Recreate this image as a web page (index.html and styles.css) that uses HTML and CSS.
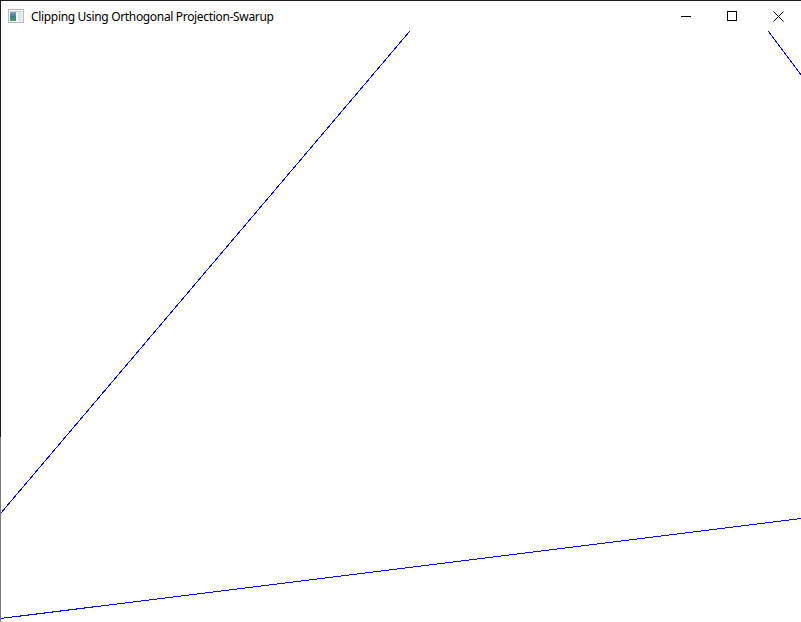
FILE: index.html
```html
<!DOCTYPE html>
<html>
<head>
<meta charset="utf-8">
<link rel="stylesheet" href="styles.css">
</head>
<body>
<div class="window">
  <div class="edge"></div>
  <div class="main">
    <div class="titlebar">
      <svg class="appicon" width="16" height="16" viewBox="0 0 16 16">
        <defs>
          <linearGradient id="g1" x1="0" y1="0" x2="0" y2="1">
            <stop offset="0" stop-color="#7fa6c8"/>
            <stop offset="0.5" stop-color="#3f7c8c"/>
            <stop offset="1" stop-color="#4aa070"/>
          </linearGradient>
        </defs>
        <rect x="0.5" y="1.5" width="15" height="13" fill="#f4f4f4" stroke="#b9b9b9"/>
        <rect x="2" y="4" width="6" height="9" fill="url(#g1)"/>
        <rect x="10" y="4" width="4" height="9" fill="#dfe6e9"/>
        <rect x="2" y="3" width="12" height="1" fill="#cfcfcf"/>
      </svg>
      <span class="title">Clipping Using Orthogonal Projection-Swarup</span>
      <div class="controls">
        <div class="ctl">
          <svg width="10" height="10" viewBox="0 0 10 10"><path d="M0 5.5H10" stroke="#000" stroke-width="1"/></svg>
        </div>
        <div class="ctl">
          <svg width="10" height="10" viewBox="0 0 10 10"><rect x="0.5" y="0.5" width="9" height="9" fill="none" stroke="#000"/></svg>
        </div>
        <div class="ctl">
          <svg width="11" height="11" viewBox="0 0 11 11"><path d="M0.5 0.5L10.5 10.5M10.5 0.5L0.5 10.5" stroke="#000" stroke-width="1"/></svg>
        </div>
      </div>
    </div>
    <div class="client">
      <svg class="canvas" width="800" height="591" viewBox="0 0 800 591" shape-rendering="crispEdges">
        <line x1="-0.5" y1="482.5" x2="408.5" y2="0.5" stroke="#0000ff" stroke-width="1"/>
        <line x1="-0.5" y1="587.5" x2="800.5" y2="487.5" stroke="#0000ff" stroke-width="1"/>
        <line x1="767.5" y1="0.5" x2="800.5" y2="44.5" stroke="#0000ff" stroke-width="1"/>
      </svg>
    </div>
  </div>
</div>
</body>
</html>
```
FILE: styles.css
```css
html, body {
  margin: 0;
  padding: 0;
  background: #ffffff;
  overflow: hidden;
}
.window {
  width: 801px;
  height: 622px;
  box-sizing: border-box;
  border-top: 1px solid #1b1b1b;
  display: flex;
  flex-direction: row;
  background: #ffffff;
}
.edge {
  width: 1px;
  flex: none;
  background: linear-gradient(#1b1b1b 0, #1b1b1b 436px, #7a7a7a 436px, #7a7a7a 100%);
}
.main {
  flex: 1;
  display: flex;
  flex-direction: column;
  min-width: 0;
}
.titlebar {
  height: 30px;
  flex: none;
  display: flex;
  align-items: center;
  padding-left: 7px;
  font-family: "Noto Sans", "Open Sans", sans-serif;
  font-size: 12px;
  color: #000;
}
.appicon {
  display: block;
  margin-right: 7px;
  margin-top: 0px;
}
.title {
  white-space: nowrap;
  letter-spacing: -0.33px;
}
.controls {
  margin-left: auto;
  display: flex;
  height: 30px;
}
.ctl {
  width: 46px;
  height: 30px;
  display: flex;
  align-items: center;
  justify-content: center;
}
.client {
  flex: 1;
  overflow: hidden;
}
.canvas {
  display: block;
  overflow: visible;
}
```
